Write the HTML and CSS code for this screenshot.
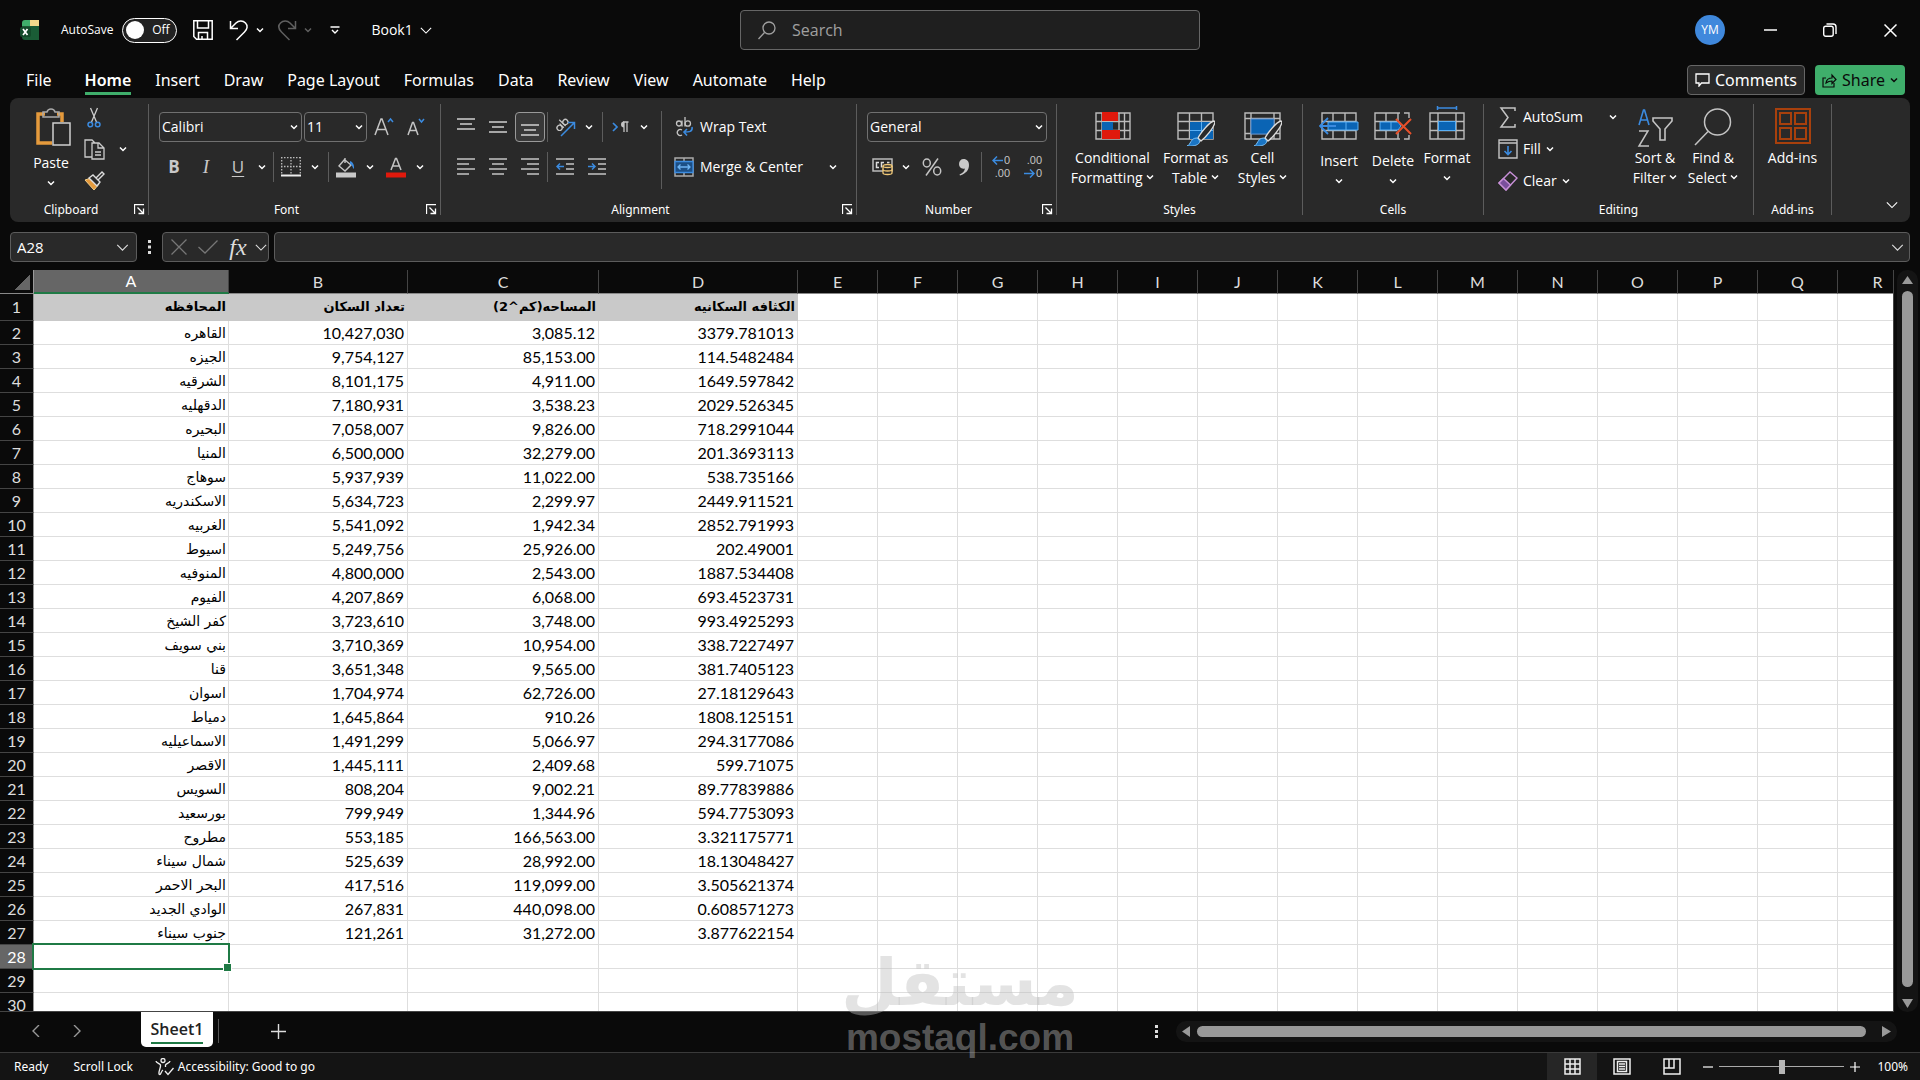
FILE: index.html
```html
<!DOCTYPE html>
<html lang="en">
<head>
<meta charset="utf-8">
<title>Book1 - Excel</title>
<link rel="stylesheet" href="styles.css">
</head>
<body>
<svg class="defs" aria-hidden="true">
  <symbol id="chev" viewBox="0 0 8 8"><path d="M1 2.5 4 5.5 7 2.5" fill="none" stroke="currentColor" stroke-width="1.5"/></symbol>
  <symbol id="chev-lg" viewBox="0 0 14 8"><path d="M1 1 7 7 13 1" fill="none" stroke="currentColor" stroke-width="1.3"/></symbol>
  <symbol id="launch" viewBox="0 0 11 11"><path d="M.5 10V.5H10M3.500 3.500 9.500 9.500M9.500 4.500V9.500H4.500" fill="none" stroke="currentColor" stroke-width="1.3"/></symbol>
</svg>
<div class="app">
  <header class="titlebar">
    <div class="title-left">
      <svg class="logo" width="20" height="20" viewBox="0 0 20 20"><path d="M2 3a3 3 0 0 1 3-3h5v7H2z" fill="#3fae6b"/><path d="M10 0h9v7h-9z" fill="#f3d98b"/><path d="M2 6h17v14H5a3 3 0 0 1-3-3z" fill="#1a5c36"/><rect y="7" width="11" height="10" rx="2" fill="#134a2a"/><path d="M3 9l4.500 6M7.500 9 3 15" stroke="#fff" stroke-width="1.7"/></svg>
      <label class="autosave">AutoSave <span class="toggle"><input type="checkbox"><i></i><b>Off</b></span></label>
      <button class="qa qa-save" aria-label="Save"><svg width="20" height="20" viewBox="0 0 20 20" fill="none" stroke="currentColor" stroke-width="1.500"><path d="M.8.800h18.400v18.400H3.500L.8 16.500zM4.500 1v7h11V1M5.500 19v-6.500h9V19M9 19v-3"/></svg></button>
      <button class="qa" aria-label="Undo"><svg width="20" height="21" viewBox="0 0 20 21" fill="none" stroke="currentColor" stroke-width="1.500"><path d="M1.500 1v7.500H9M1.500 8.500 7 3c3-3 7-2.500 9.500 0s2 6-1 9l-8 8"/></svg></button>
      <button class="qc" aria-label="Undo list"><svg width="8" height="8"><use href="#chev"/></svg></button>
      <button class="qa dim" aria-label="Redo"><svg width="20" height="21" viewBox="0 0 20 21" fill="none" stroke="currentColor" stroke-width="1.500"><path d="M18.500 1v7.500H11M18.500 8.500 13 3c-3-3-7-2.500-9.500 0s-2 6 1 9l8 8"/></svg></button>
      <button class="qc dim" aria-label="Redo list"><svg width="8" height="8"><use href="#chev"/></svg></button>
      <button class="qx" aria-label="Customize toolbar"><svg width="10" height="9" viewBox="0 0 10 9" fill="none" stroke="currentColor" stroke-width="1.400"><path d="M.5 1h9M2 4l3 3 3-3"/></svg></button>
      <button class="book">Book1 <svg width="12" height="7"><use href="#chev-lg"/></svg></button>
    </div>
    <label class="search"><svg width="18" height="19" viewBox="0 0 18 19" fill="none" stroke="currentColor" stroke-width="1.300"><circle cx="11" cy="7" r="6"/><path d="M6.500 11.500.5 18"/></svg><input type="text" placeholder="Search" aria-label="Search"></label>
    <div class="title-right">
      <button class="avatar">YM</button>
      <button class="win" aria-label="Minimize"><svg width="13" height="13" viewBox="0 0 13 13" stroke="#fff" stroke-width="1.500"><path d="M0 6h13"/></svg></button>
      <button class="win" aria-label="Restore"><svg width="14" height="14" viewBox="0 0 14 14" fill="none" stroke="#fff" stroke-width="1.400"><rect x=".7" y="3.300" width="9.500" height="10" rx="2"/><path d="M3.500 1h6.500a3 3 0 0 1 3 3v7"/></svg></button>
      <button class="win" aria-label="Close"><svg width="13" height="13" viewBox="0 0 13 13" stroke="#fff" stroke-width="1.500"><path d="M.5.500l12 12M12.500.500l-12 12"/></svg></button>
    </div>
  </header>

  <nav class="tabs">
    <button class="file">File</button><button class="on">Home</button><button>Insert</button><button>Draw</button><button>Page Layout</button><button>Formulas</button><button>Data</button><button>Review</button><button>View</button><button>Automate</button><button>Help</button>
    <button class="comments"><svg width="15" height="14" viewBox="0 0 15 14" fill="none" stroke="currentColor" stroke-width="1.300"><path d="M1 1h13v9H6.500L4 13v-3H1z"/></svg>Comments</button>
    <button class="share"><svg width="15" height="15" viewBox="0 0 15 15" fill="none" stroke="currentColor" stroke-width="1.200"><path d="M4 5H1v9h11v-4M4 10c.5-3.500 2.500-5 6-5V2l4 4.500-4 4V8C7.500 8 6 8.500 4 10z"/></svg>Share<svg width="8" height="8"><use href="#chev"/></svg></button>
  </nav>

  <section class="ribbon">
    <div class="group g-clip">
      <div class="body top3">
        <button class="big paste"><svg width="39" height="40" viewBox="-3 0 39 40" fill="none"><path d="M10 6H3v29h14M22 6h5v8" stroke="#e59a3c" stroke-width="3.500"/><path d="M8 4h4c1-4 7-4 8 0h4v5H8z" stroke="#aaa" stroke-width="1.500"/><rect x="18" y="15" width="17" height="22" fill="#292929" stroke="#d0d0d0" stroke-width="1.500"/></svg><span>Paste</span><svg width="8" height="8"><use href="#chev"/></svg></button>
        <div class="clips">
          <button aria-label="Cut"><svg width="14" height="21" viewBox="0 0 14 21" fill="none"><path d="M3.500 1 9.500 15M10.500 1 4.500 15" stroke="#ccc" stroke-width="1.300"/><circle cx="3.300" cy="17.500" r="2.300" stroke="#3b8be0" stroke-width="1.500"/><circle cx="10.700" cy="17.500" r="2.300" stroke="#3b8be0" stroke-width="1.500"/></svg></button>
          <button class="r2" aria-label="Copy"><svg width="21" height="21" viewBox="0 0 21 21" fill="none" stroke="#ccc" stroke-width="1.300"><path d="M8 18H1V1h7l3 3M8 4h7l5 5v11H8zM14 4v5h6M11 13h6M11 16h6"/></svg></button>
          <button class="r2" aria-label="Copy options"><svg width="8" height="8"><use href="#chev"/></svg></button>
          <button class="r3" aria-label="Format Painter"><svg width="21" height="20" viewBox="0 0 21 20" fill="none"><path d="M1 9l6-2 8 6-5 6z" fill="#e59a3c" stroke="#f3cf8b"/><path d="M5 7l4-3 7 7-3 4zM12 7l6-6 2 2-6 6" stroke="#ddd" stroke-width="1.400" fill="#292929"/></svg></button>
        </div>
      </div>
      <div class="cap"><span>Clipboard</span><button aria-label="Clipboard settings"><svg width="11" height="11"><use href="#launch"/></svg></button></div>
    </div><i class="div"></i>

    <div class="group g-font">
      <div class="body rows">
        <div class="row">
          <span class="combo c-font"><select aria-label="Font"><option>Calibri</option></select><svg width="8" height="8"><use href="#chev"/></svg></span>
          <span class="combo c-size"><select aria-label="Font size"><option>11</option></select><svg width="8" height="8"><use href="#chev"/></svg></span>
          <button class="ib" aria-label="Increase font size"><svg width="20" height="20" viewBox="0 0 20 20" fill="none"><path d="M1 18 7 2h1l6 16M3.300 12.500h8.400" stroke="#c4c4c4" stroke-width="1.500"/><path d="M14 5l2.500-3L19 5" stroke="#3b8be0" stroke-width="1.500"/></svg></button>
          <button class="ib" aria-label="Decrease font size"><svg width="20" height="20" viewBox="0 0 20 20" fill="none"><path d="M2 18 6.500 5.500h1L12 18M4 13.500h6" stroke="#c4c4c4" stroke-width="1.500"/><path d="M13 2l2.500 3L18 2" stroke="#3b8be0" stroke-width="1.500"/></svg></button>
        </div>
        <div class="row">
          <button class="ib fmt b">B</button><button class="ib fmt i">I</button><button class="ib fmt u">U</button><button class="cb" aria-label="Underline styles"><svg width="8" height="8"><use href="#chev"/></svg></button><i class="sep"></i>
          <button class="ib" aria-label="Borders"><svg width="20" height="20" viewBox="0 0 20 20" fill="none" stroke="#bbb"><path d="M.7 0v18M10 0v18M19.300 0v18M0 .700h20M0 9.500h20" stroke-dasharray="1.500 1.500" stroke-width="1.300"/><path d="M0 18.500h20" stroke="#eee" stroke-width="2"/></svg></button><button class="cb" aria-label="Border styles"><svg width="8" height="8"><use href="#chev"/></svg></button><i class="sep wide"></i>
          <button class="ib" aria-label="Fill color"><svg width="20" height="21" viewBox="0 0 20 21" fill="none"><path d="M9 1v5M9 2 3 9l6 5 6-6-6-5" stroke="#c4c4c4" stroke-width="1.400"/><path d="M14 4c3 1 4.500 4 4 8-1.500-1-1.500-4-4-5z" fill="#3b8be0"/><path d="M0 15.500h20v5H0z" fill="#c8c8c8"/></svg></button><button class="cb" aria-label="Fill colors"><svg width="8" height="8"><use href="#chev"/></svg></button>
          <button class="ib" aria-label="Font color"><svg width="20" height="21" viewBox="0 0 20 21" fill="none"><path d="M5 13 9.500 1.500h1L15 13M6.500 9h7" stroke="#c4c4c4" stroke-width="1.500"/><path d="M0 15.500h20v5H0z" fill="#e0190c"/></svg></button><button class="cb" aria-label="Font colors"><svg width="8" height="8"><use href="#chev"/></svg></button>
        </div>
      </div>
      <div class="cap"><span>Font</span><button aria-label="Font settings"><svg width="11" height="11"><use href="#launch"/></svg></button></div>
    </div><i class="div"></i>

    <div class="group g-align">
      <div class="body split">
        <div class="rows">
          <div class="row">
            <button class="ib" aria-label="Top align"><svg width="18" height="20" viewBox="0 0 18 20" stroke="#d0d0d0" stroke-width="1.500"><path d="M0 2h18M3 7h12M0 12h18"/></svg></button><button class="ib" aria-label="Middle align"><svg width="18" height="20" viewBox="0 0 18 20" stroke="#d0d0d0" stroke-width="1.500"><path d="M0 5h18M3 10h12M0 15h18"/></svg></button><button class="ib pressed" aria-label="Bottom align"><svg width="18" height="20" viewBox="0 0 18 20" stroke="#d0d0d0" stroke-width="1.500"><path d="M0 8h18M3 13h12M0 18h18"/></svg></button><i class="sep"></i>
            <button class="ib" aria-label="Orientation"><svg width="22" height="22" viewBox="0 0 22 22" fill="none"><g transform="rotate(-45 7 9)" stroke="#c4c4c4" stroke-width="1.300"><circle cx="4" cy="10" r="2.600"/><path d="M7 7v6M9.500 4v9"/><circle cx="12.200" cy="10" r="2.600"/></g><path d="M7 20 20 7M14 6.500h6.500V13" stroke="#3b8be0" stroke-width="1.500"/></svg></button><button class="cb" aria-label="Orientation options"><svg width="8" height="8"><use href="#chev"/></svg></button><i class="sep wide"></i>
            <button class="ib" aria-label="Text direction"><svg width="17" height="14" viewBox="0 0 17 14" fill="none"><path d="M1 3l4 4-4 4" stroke="#3b8be0" stroke-width="1.700"/><path d="M12 12V2M15 12V2M16.500 2H11" stroke="#c4c4c4" stroke-width="1.300"/><path d="M12 1.500a3 3 0 0 0 0 6z" fill="#c4c4c4"/></svg></button><button class="cb" aria-label="Text direction options"><svg width="8" height="8"><use href="#chev"/></svg></button>
          </div>
          <div class="row">
            <button class="ib" aria-label="Align left"><svg width="18" height="20" viewBox="0 0 18 20" stroke="#c4c4c4" stroke-width="1.500"><path d="M0 2h18M0 7h12M0 12h18M0 17h12"/></svg></button><button class="ib" aria-label="Center"><svg width="18" height="20" viewBox="0 0 18 20" stroke="#c4c4c4" stroke-width="1.500"><path d="M0 2h18M3 7h12M0 12h18M3 17h12"/></svg></button><button class="ib" aria-label="Align right"><svg width="18" height="20" viewBox="0 0 18 20" stroke="#c4c4c4" stroke-width="1.500"><path d="M0 2h18M6 7h12M0 12h18M6 17h12"/></svg></button><i class="sep"></i>
            <button class="ib" aria-label="Decrease indent"><svg width="18" height="20" viewBox="0 0 18 20" fill="none" stroke="#c4c4c4" stroke-width="1.500"><path d="M0 2h18M10 7h8M10 12h8M0 17h18"/><path d="M8 9.500H1M4 6.500l-3 3 3 3" stroke="#3b8be0"/></svg></button><button class="ib" aria-label="Increase indent"><svg width="18" height="20" viewBox="0 0 18 20" fill="none" stroke="#c4c4c4" stroke-width="1.500"><path d="M0 2h18M10 7h8M10 12h8M0 17h18"/><path d="M0 9.500h7M4 6.500l3 3-3 3" stroke="#3b8be0"/></svg></button>
          </div>
        </div>
        <i class="tall"></i>
        <div class="rows">
          <button class="wide-btn"><svg width="20" height="20" viewBox="0 0 20 20" fill="none" stroke="#c4c4c4" stroke-width="1.300"><circle cx="5" cy="6.500" r="2.500"/><path d="M8 3.500V9.500M11 0v9.500"/><circle cx="13.800" cy="6.500" r="2.700"/><path d="M8 13a3 3 0 1 0 0 5"/><path d="M18 10c1 5-3 5-8 5M13 12l-3 3 3 3.500" stroke="#3b8be0" stroke-width="1.600"/></svg>Wrap Text</button>
          <div class="row"><button class="wide-btn merge"><svg width="20" height="20" viewBox="0 0 20 20" fill="none"><path d="M1 1h18v18H1zM10 1v3M10 16v3" stroke="#aaa" stroke-width="1.500"/><path d="M1 4.500h18v11H1z" fill="#1c4f86" stroke="#3b8be0" stroke-width="1.300"/><path d="M4 10h12M6.500 7.500 4 10l2.500 2.500M13.500 7.500 16 10l-2.500 2.500" stroke="#6db3f2" stroke-width="1.300"/></svg>Merge &amp; Center</button><button class="cb" aria-label="Merge options"><svg width="8" height="8"><use href="#chev"/></svg></button></div>
        </div>
      </div>
      <div class="cap"><span>Alignment</span><button aria-label="Alignment settings"><svg width="11" height="11"><use href="#launch"/></svg></button></div>
    </div><i class="div"></i>

    <div class="group g-num">
      <div class="body rows">
        <span class="combo c-num"><select aria-label="Number format"><option>General</option></select><svg width="8" height="8"><use href="#chev"/></svg></span>
        <div class="row">
          <button class="ib" aria-label="Accounting format"><svg width="21" height="18" viewBox="0 0 21 18" fill="none"><path d="M1 1h19v12H1z" stroke="#bbb" stroke-width="1.500"/><path d="M7 4.500H4.500v5H7M12 4.500H9.500v5M15 4.500h2.500" stroke="#ddd" stroke-width="1.500"/><path d="M11 8c0-2 9-2 9 0v7c0 2-9 2-9 0z" fill="#292929" stroke="#f0c878" stroke-width="1.300"/><path d="M11 8c0 2 9 2 9 0M11 11.500c0 2 9 2 9 0" stroke="#f0c878" stroke-width="1.300"/></svg></button><button class="cb" aria-label="Accounting options"><svg width="8" height="8"><use href="#chev"/></svg></button>
          <button class="ib pct" aria-label="Percent style"><svg width="20" height="20" viewBox="0 0 20 20" fill="none" stroke="#c4c4c4" stroke-width="1.500"><ellipse cx="4.800" cy="6" rx="3.500" ry="4"/><ellipse cx="15.200" cy="14" rx="3.500" ry="4"/><path d="M16 1.500 4 18.500"/></svg></button><button class="ib" aria-label="Comma style"><svg width="12" height="18" viewBox="0 0 12 18" fill="#c8c8c8"><path d="M5.500 1C9 1 11 3.500 11 7c0 5-3 8.500-9 10.500l-.5-1C5 15 6.500 13 7 10.500 3 11.500 1 9 1 6c0-3 2-5 4.500-5z"/></svg></button><i class="sep"></i>
          <button class="ib dec" aria-label="Increase decimal"><svg width="11" height="9" viewBox="0 0 11 9" fill="none" stroke="#3b8be0" stroke-width="1.500"><path d="M11 4.500H1M5 .500l-4 4 4 4"/></svg><span>0</span><span>.00</span></button><button class="ib dec" aria-label="Decrease decimal"><span>.00</span><svg width="11" height="9" viewBox="0 0 11 9" fill="none" stroke="#3b8be0" stroke-width="1.500"><path d="M0 4.500h10M6 .500l4 4-4 4"/></svg><span>0</span></button>
        </div>
      </div>
      <div class="cap"><span>Number</span><button aria-label="Number settings"><svg width="11" height="11"><use href="#launch"/></svg></button></div>
    </div><i class="div"></i>

    <div class="group g-styles">
      <div class="body bigs">
        <button class="big two w88"><svg width="36" height="34" viewBox="0 0 36 34" fill="none"><path d="M1 1h34v26H1zM1 9.500h34M1 18.500h34M7 1v26M24 1v26M29.500 1v26" stroke="#bbb" stroke-width="1.400"/><path d="M7 0h16v9H7zM7 18h18v9H7z" fill="#e0190c"/><path d="M7 10h11v8H7z" fill="#0a64b4"/></svg><span>Conditional<br>Formatting <svg width="8" height="8"><use href="#chev"/></svg></span></button>
        <button class="big two w70"><svg width="38" height="34" viewBox="0 0 38 34" fill="none"><path d="M1 1h35v26H1zM1 9.500h35M1 18.500h35M12.500 1v26M24.500 1v26" stroke="#bbb" stroke-width="1.400"/><path d="M13 10h23v17H13z" fill="#0a64b4"/><path d="M24.500 10v17M13 18.500h23" stroke="#5ab0f5"/><path d="M37 9c-5 1-14 13-16 17l3 3c4-3 13-13 14-19z" fill="#292929" stroke="#ddd" stroke-width="1.400"/><path d="M10 34c4-1 3-8 10-8 6 4 1 9-10 8z" fill="#1a75c4" stroke="#7cc0f5"/></svg><span>Format as<br>Table <svg width="8" height="8"><use href="#chev"/></svg></span></button>
        <button class="big two w56"><svg width="38" height="34" viewBox="0 0 38 34" fill="none"><path d="M1 1h35v26H1zM1 6.500h35M1 21.500h35M7 1v26M30 1v26" stroke="#bbb" stroke-width="1.400"/><path d="M7 7h23v15H7z" fill="#0a64b4" stroke="#5a8fd0"/><path d="M37 9c-5 1-14 13-16 17l3 3c4-3 13-13 14-19z" fill="#292929" stroke="#ddd" stroke-width="1.400"/><path d="M10 34c4-1 3-8 10-8 6 4 1 9-10 8z" fill="#1a75c4" stroke="#7cc0f5"/></svg><span>Cell<br>Styles <svg width="8" height="8"><use href="#chev"/></svg></span></button>
      </div>
      <div class="cap"><span>Styles</span></div>
    </div><i class="div"></i>

    <div class="group g-cells">
      <div class="body bigs">
        <button class="big one"><svg width="40" height="28" viewBox="0 0 40 28" fill="none"><path d="M3 1h34v26H3zM14 1v26M26 1v26M3 9.500h34M3 18.500h34" stroke="#bbb" stroke-width="1.400"/><path d="M9 10h30v8H9z" fill="#0a64b4" stroke="#5ab0f5"/><path d="M27 10v8" stroke="#5ab0f5"/><path d="M17 14H2M9 6l-8 8 8 8" stroke="#3b8be0" stroke-width="1.800"/></svg><span>Insert</span><svg width="8" height="8"><use href="#chev"/></svg></button>
        <button class="big one"><svg width="38" height="28" viewBox="0 0 38 28" fill="none"><path d="M26 1H1v26h25M30 1h5v5M30 27h5v-4M12 1v26M24 1v8M24 20v7M1 9.500h22M1 18.500h22" stroke="#bbb" stroke-width="1.400"/><path d="M6 10h18l3 4-3 4H6z" fill="#0a64b4" stroke="#5ab0f5"/><path d="M17 10v8" stroke="#5ab0f5"/><path d="M22 7l15 15M37 7 22 22" stroke="#e8502a" stroke-width="2"/></svg><span>Delete</span><svg width="8" height="8"><use href="#chev"/></svg></button>
        <button class="big one fmtbig"><svg width="36" height="34" viewBox="0 0 36 34" fill="none"><path d="M1 7h34v26H1zM9 7v26M27 7v26M1 15.500h34M1 24.500h34" stroke="#bbb" stroke-width="1.400"/><path d="M9.500 15.500h17v9h-17z" fill="#0a64b4" stroke="#5ab0f5"/><path d="M8 2h20M8.500 0v4M27.500 0v4" stroke="#3b8be0" stroke-width="1.500"/></svg><span>Format</span><svg width="8" height="8"><use href="#chev"/></svg></button>
      </div>
      <div class="cap"><span>Cells</span></div>
    </div><i class="div"></i>

    <div class="group g-edit">
      <div class="body split">
        <div class="list">
          <div class="row"><button class="li"><svg width="20" height="21" viewBox="0 0 20 21" fill="none" stroke="#c4c4c4" stroke-width="1.500"><path d="M17 4V1H3l7 9.500L3 20h14v-3"/></svg>AutoSum</button><button class="cb" aria-label="AutoSum options"><svg width="8" height="8"><use href="#chev"/></svg></button></div>
          <button class="li"><svg width="20" height="20" viewBox="0 0 20 20" fill="none" stroke="#c4c4c4" stroke-width="1.400"><path d="M1 1h18v18H1zM1 4h18"/><path d="M10 7v8M6.500 12l3.500 3.500 3.500-3.500" stroke="#3b8be0" stroke-width="1.600"/></svg>Fill <svg width="8" height="8"><use href="#chev"/></svg></button>
          <button class="li"><svg width="20" height="20" viewBox="0 0 20 20" fill="none" stroke="#c890d8" stroke-width="1.400"><path d="M1 12 12 1l7 6L8 19z"/><path d="M1 12l4.500-4.500 7 6.500L8 19z" fill="#7a4f9c"/></svg>Clear <svg width="8" height="8"><use href="#chev"/></svg></button>
        </div>
        <div class="bigs">
          <button class="big two w56 top1"><svg width="36" height="40" viewBox="0 0 36 40" fill="none"><path d="M2 17 6.500 2h1L12 17M3.500 12h7" stroke="#3b8be0" stroke-width="1.600"/><path d="M2 23h9L2 38h10" stroke="#c4c4c4" stroke-width="1.500"/><path d="M16 10h19v3l-7 8v11h-5V21l-7-8z" stroke="#c4c4c4" stroke-width="1.600"/></svg><span>Sort &amp;<br>Filter <svg width="8" height="8"><use href="#chev"/></svg></span></button>
          <button class="big two w60 top1"><svg width="38" height="40" viewBox="0 0 38 40" fill="none" stroke="#c4c4c4" stroke-width="1.500"><circle cx="23.500" cy="14" r="13"/><path d="M14 23.500 1 37"/></svg><span>Find &amp;<br>Select <svg width="8" height="8"><use href="#chev"/></svg></span></button>
        </div>
      </div>
      <div class="cap"><span>Editing</span></div>
    </div><i class="div"></i>

    <div class="group g-add">
      <div class="body bigs">
        <button class="big two w70 top1"><svg width="36" height="40" viewBox="0 0 36 40" fill="none" stroke="#a8400c" stroke-width="2"><path d="M1 1h34v34H1z"/><path d="M5 5h11v11H5zM20 5h11v11H20zM5 20h11v11H5zM20 20h11v11H20z"/></svg><span>Add-ins</span></button>
      </div>
      <div class="cap"><span>Add-ins</span></div>
    </div><i class="div"></i>
    <button class="collapse" aria-label="Collapse ribbon"><svg width="12" height="8"><use href="#chev-lg"/></svg></button>
  </section>

  <section class="formula">
    <div class="box name"><input type="text" value="A28" aria-label="Name box"><button aria-label="Names"><svg width="13" height="7"><use href="#chev-lg"/></svg></button></div>
    <svg class="dots" width="3" height="14" viewBox="0 0 3 14" fill="#ddd"><path d="M0 0h3v3H0zM0 5.500h3v3H0zM0 11h3v3H0z"/></svg>
    <div class="box fx">
      <button class="dim" aria-label="Cancel"><svg width="16" height="16" viewBox="0 0 16 16" stroke="currentColor" stroke-width="1.300"><path d="M.5.500l15 15M15.500.500l-15 15"/></svg></button>
      <button class="dim" aria-label="Enter"><svg width="20" height="14" viewBox="0 0 20 14" fill="none" stroke="currentColor" stroke-width="1.300"><path d="M.5 7 7 13 19.500.500"/></svg></button>
      <button class="fn">fx</button>
      <button class="mini" aria-label="Functions"><svg width="12" height="7"><use href="#chev-lg"/></svg></button>
    </div>
    <div class="box bar"><input type="text" aria-label="Formula"><button aria-label="Expand"><svg width="13" height="7"><use href="#chev-lg"/></svg></button></div>
  </section>

  <main class="work">
    <div class="sheet"><table id="grid"></table></div>
    <div class="vscroll"><svg width="11" height="9" viewBox="0 0 11 9" fill="#999"><path d="M5.500 0 11 8H0z"/></svg><i></i><svg width="11" height="9" viewBox="0 0 11 9" fill="#999"><path d="M5.500 9 11 0H0z"/></svg></div>
  </main>

  <section class="strip">
    <button class="nav" aria-label="Previous sheet"><svg width="8" height="12" viewBox="0 0 8 12" fill="none" stroke="currentColor" stroke-width="1.400"><path d="M7 0 1 6l6 6"/></svg></button>
    <button class="nav" aria-label="Next sheet"><svg width="8" height="12" viewBox="0 0 8 12" fill="none" stroke="currentColor" stroke-width="1.400"><path d="M1 0l6 6-6 6"/></svg></button>
    <button class="sheet-tab"><span>Sheet1</span></button><i class="tick"></i>
    <button class="plus" aria-label="New sheet"><svg width="15" height="15" viewBox="0 0 15 15" stroke="#ddd" stroke-width="1.400"><path d="M7.500 0v15M0 7.500h15"/></svg></button>
    <svg class="dots" width="3" height="13" viewBox="0 0 3 13" fill="#ddd"><path d="M0 0h3v3H0zM0 5h3v3H0zM0 10h3v3H0z"/></svg>
    <div class="hscroll"><svg width="9" height="11" viewBox="0 0 9 11" fill="#999"><path d="M0 5.500 8 0v11z"/></svg><i></i><svg width="9" height="11" viewBox="0 0 9 11" fill="#999"><path d="M9 5.500 0 0v11z"/></svg></div>
  </section>

  <footer class="status">
    <span class="ready">Ready</span><span class="lock">Scroll Lock</span>
    <button class="acc"><svg width="19" height="18" viewBox="0 0 19 18" fill="none" stroke="#eee" stroke-width="1.300"><circle cx="8" cy="2.500" r="2"/><path d="M1 3c0 2 4 2.500 4.500 4 .5 3-2 5-1.500 9 2 2 2-3 4-4M15 3c0 2-4 2.500-4.500 4v2M10 13l3 3.500L18.500 10"/></svg>Accessibility: Good to go</button>
    <div class="views">
      <button class="cur" aria-label="Normal"><svg width="17" height="17" viewBox="0 0 17 17" fill="none" stroke="#eee" stroke-width="1.500"><path d="M1 1h15v15H1zM6 1v15M11 1v15M1 6h15M1 11h15"/></svg></button>
      <button aria-label="Page Layout view"><svg width="18" height="17" viewBox="0 0 18 17" fill="none" stroke="#eee" stroke-width="1.500"><path d="M1 1h16v15H1zM4.500 3.500h9v10h-9zM6 6h6M6 8.500h6M6 11h6"/></svg></button>
      <button aria-label="Page Break view"><svg width="18" height="17" viewBox="0 0 18 17" fill="none" stroke="#eee" stroke-width="1.500"><path d="M1 1h16v15H1zM1 10h10V1M6 1v9"/></svg></button>
    </div>
    <button class="zb" aria-label="Zoom out"><svg width="10" height="10" viewBox="0 0 10 10" stroke="#fff" stroke-width="1.200"><path d="M0 5h10"/></svg></button>
    <input class="zoom" type="range" min="0" max="100" value="50" aria-label="Zoom">
    <button class="zb" aria-label="Zoom in"><svg width="10" height="10" viewBox="0 0 10 10" stroke="#fff" stroke-width="1.200"><path d="M0 5h10M5 0v10"/></svg></button>
    <span class="pctv">100%</span>
  </footer>
  <div class="mark"><span class="mark-ar" lang="ar">مستقل</span><span class="mark-en">mostaql.com</span></div>
</div>
<script src="script.js"></script>
</body>
</html>
```
FILE: styles.css
```css
* { box-sizing: border-box; }
body { margin: 0; background: #0a0a0a; color: #fff; font: 14px/20px "Open Sans", "Noto Sans", sans-serif; }
button, input, select { font: inherit; color: inherit; background: none; border: 0; padding: 0; margin: 0; outline: 0; }
button { display: flex; align-items: center; justify-content: center; white-space: nowrap; }
svg { display: block; flex: none; }
.defs { display: none; }
.app { position: relative; display: flex; flex-direction: column; height: 100vh; overflow: hidden; }
.dim { color: #606060; }

.titlebar { display: grid; grid-template-columns: 1fr 460px 1fr; align-items: center; height: 60px; padding-left: 20px; flex: none; }
.title-left, .title-right { display: flex; align-items: center; }
.title-left { font-size: 12px; }
.autosave { display: flex; align-items: center; gap: 9px; margin-left: 21px; }
.toggle { display: grid; grid-template-columns: 22px 1fr; align-items: center; width: 55px; height: 25px; padding: 0 3px; border: 1px solid #fff; border-radius: 13px; background: #222; }
.toggle input { display: none; }
.toggle i { width: 18px; height: 18px; border-radius: 50%; background: #fff; }
.toggle b { font-weight: 400; text-align: center; }
.qa { width: 24px; height: 30px; margin-left: 6px; }
.qa-save { margin: 0 6px 0 14px; }
.qc { width: 18px; height: 30px; }
.qx { width: 20px; height: 30px; margin-left: 8px; }
.book { gap: 7px; margin-left: 26px; font-size: 14px; }
.search { display: flex; align-items: center; gap: 16px; height: 40px; padding-left: 17px; border: 1px solid #666; border-radius: 4px; background: #1f1f1f; color: #a0a0a0; }
.search input { flex: 1; font-size: 16px; }
.search input::placeholder { color: #a0a0a0; }
.title-right { justify-content: flex-end; }
.avatar { width: 30px; height: 30px; margin-right: 15px; border-radius: 50%; background: #3f88dc; font-size: 12px; }
.win { width: 60px; height: 40px; }

.tabs { display: flex; align-items: center; height: 38px; padding: 2px 15px 0 14px; flex: none; font: 16px/20px "Noto Sans", sans-serif; }
.tabs button { height: 30px; padding: 0 12px; }
.tabs .file { margin-right: 9px; }
.tabs .on { font-weight: 600; background: linear-gradient(#3fae6b, #3fae6b) 12px 100% / calc(100% - 24px) 3px no-repeat; }
.tabs .comments { gap: 5px; width: 118px; margin-left: auto; padding: 0; border: 1px solid #666; border-radius: 4px; background: #292929; }
.tabs .share { gap: 5px; width: 90px; margin-left: 10px; padding: 0; border-radius: 4px; background: #3fae6b; color: #0a0a0a; }

.ribbon { display: flex; height: 124px; margin: 0 10px; border-radius: 8px; background: #292929; flex: none; }
.div { width: 1px; margin: 6px 0 7px; background: #5c5c5c; flex: none; }
.group { display: flex; flex-direction: column; flex: none; }
.g-clip { width: 138px; }
.g-font { width: 291px; }
.g-align { width: 415px; }
.g-num { width: 199px; }
.g-styles { width: 245px; }
.g-cells { width: 180px; }
.g-edit { width: 269px; }
.g-add { width: 77px; }
.body { display: flex; height: 99px; }
.cap { display: flex; align-items: center; height: 25px; font: 12px/20px "Noto Sans", sans-serif; }
.cap span { flex: 1; text-align: center; }
.cap button { width: 15px; height: 15px; margin-right: 1px; }

.rows { display: flex; flex-direction: column; gap: 10px; padding: 14px 0 0 10px; }
.row { display: flex; align-items: center; gap: 2px; height: 30px; }
.ib { width: 30px; height: 30px; flex: none; }
.cb { width: 18px; height: 30px; margin-left: -2px; flex: none; }
.sep { width: 1px; height: 30px; background: #5c5c5c; flex: none; }
.sep.wide { margin-left: 2px; }
.pressed { border: 1px solid #999; border-radius: 4px; background: #383838; }
.fmt { color: #c8c8c8; font-size: 17px; }
.fmt.b { font-weight: 700; }
.fmt.i { font-family: "Liberation Serif", serif; font-style: italic; font-size: 19px; }
.fmt.u { text-decoration: underline; text-underline-offset: 3px; }
.combo { display: grid; align-items: center; height: 30px; border: 1px solid #707070; border-radius: 4px; flex: none; }
.combo select { grid-area: 1 / 1; height: 28px; padding-left: 2px; appearance: none; }
.combo svg { grid-area: 1 / 1; justify-self: end; margin-right: 3px; pointer-events: none; }
.c-font { width: 143px; }
.c-size { width: 63px; }
.c-num { width: 180px; }

.big { flex-direction: column; justify-content: flex-start; flex: none; }
.big span { display: block; text-align: center; line-height: 20px; }
.big span svg { display: inline-block; vertical-align: 2px; }
.bigs { display: flex; }
.body.bigs { justify-content: center; gap: 4px; }
.big.two { padding-top: 14px; }
.big.two > svg { margin-bottom: 2px; }
.big.top1 { padding-top: 10px; }
.big.top1 > svg { margin-bottom: 0; }
.big.one { width: 54px; padding-top: 14px; }
.big.one > svg:first-child { margin-bottom: 11px; }
.big.fmtbig { padding-top: 8px; }
.big.fmtbig > svg:first-child { margin-bottom: 8px; }
.big.one > svg:last-child { margin-top: 6px; }
.g-cells .body { gap: 0; }
.w88 { width: 88px; }
.w70 { width: 70px; }
.w60 { width: 60px; }
.w56 { width: 56px; }
.top3 { padding-top: 3px; }
.paste { width: 54px; margin-left: 14px; padding-top: 7px; }
.paste > svg:first-child { margin-bottom: 5px; }
.paste > svg:last-child { margin-top: 6px; }
.clips { display: grid; grid-template: repeat(3, 32px) / 20px 38px; margin-left: 6px; }
.clips .r2 { grid-row: 2; }
.clips .r3 { grid-row: 3; }
.split > .tall { width: 1px; margin: 13px 0 8px 8px; background: #5c5c5c; }
.split > .tall + .rows { padding-left: 12px; }
.wide-btn { justify-content: flex-start; gap: 6px; height: 30px; }
.merge { width: 150px; }
.list { padding: 3px 0 0 14px; width: 138px; margin-right: 5px; }
.list .row, .list .li { height: 32px; }
.li { gap: 5px; justify-content: flex-start; }
.list .row { justify-content: space-between; }
.dec { flex-wrap: wrap; align-content: center; justify-content: flex-end; padding-right: 4px; font: 11px/13px "Liberation Sans", Arial, sans-serif; color: #c4c4c4; column-gap: 1px; }
.collapse { width: 30px; height: 30px; margin: 92px 3px 0 auto; }

.formula { display: flex; align-items: center; gap: 5px; height: 30px; margin: 10px 10px 8px; flex: none; }
.box { display: flex; align-items: center; height: 30px; border: 1px solid #5c5c5c; border-radius: 4px; background: #292929; color: #ddd; }
.box button { width: 28px; height: 28px; }
.box input { flex: 1; min-width: 0; padding-left: 6px; }
.name { width: 127px; }
.name input { font-size: 15px; color: #fff; }
.formula .dots { margin: 0 6px; }
.box.fx { width: 107px; padding-left: 1px; }
.fx button.dim { width: 29px; color: #777; }
.fx .fn { width: 32px; font: italic 24px/24px "Liberation Serif", serif; }
.fx .mini { width: 14px; }
.bar { flex: 1; }
.bar button { width: 24px; }

.work { display: flex; flex: 1; min-height: 0; gap: 3px; padding-right: 2px; }
.sheet { flex: 1; min-width: 0; overflow: hidden; border-right: 1px solid #444; border-bottom: 1px solid #444; }
table { table-layout: fixed; width: 1918px; border-collapse: separate; border-spacing: 0; font: 16px/20px Lato, "DejaVu Sans", sans-serif; color: #000; background: #fff; }
.c-head { width: 34px; }
.c-a { width: 195px; }
.c-b { width: 179px; }
.c-c { width: 191px; }
.c-d { width: 199px; }
th { padding: 0; background: #0a0a0a; color: #ddd; font-weight: 400; }
thead th { height: 24px; border-right: 1px solid #444; border-bottom: 1px solid #888; }
thead th.hot { background: #666; color: #fff; border-bottom: 2px solid #1f7a45; }
thead th:first-child { background: linear-gradient(135deg, transparent 50%, #666 50%) 15px 4px / 15px 16px no-repeat #0a0a0a; border-right-color: #999; }
tbody th { height: 24px; border-right: 1px solid #999; border-bottom: 1px solid #444; }
tbody th.hot { background: #666; color: #fff; }
td { height: 24px; padding: 0 3px 0 0; border-right: 1px solid #dedede; border-bottom: 1px solid #dedede; text-align: right; white-space: nowrap; }
td[lang="ar"] { font: 14px/20px "DejaVu Sans", sans-serif; }
.lead th, .lead td { height: 27px; }
.lead td[lang="ar"] { background: #c9c9c9; border-color: #c9c9c9; font-size: 13px; font-weight: 700; }
td.cursor { position: relative; }
td.cursor::before { content: ""; position: absolute; inset: -2px; border: 2px solid #1f7a45; }
td.cursor::after { content: ""; position: absolute; right: -4px; bottom: -4px; width: 7px; height: 7px; border: 1px solid #fff; background: #1f7a45; }
.vscroll, .hscroll { display: flex; align-items: center; background: #141414; border-radius: 10px; }
.vscroll { flex-direction: column; width: 21px; padding: 6px 0 4px; gap: 6px; }
.vscroll i { flex: 1; width: 11px; margin-bottom: 6px; border-radius: 6px; background: #999; }

.strip { display: flex; align-items: center; height: 40px; flex: none; padding: 0 23px 2px 0; }
.nav { width: 41px; height: 30px; color: #999; }
.nav:first-child { margin-left: 15px; }
.sheet-tab { align-self: flex-start; width: 72px; height: 35px; margin-left: 44px; border-radius: 0 0 5px 5px; background: #fff; color: #222; font-size: 16px; font-weight: 600; }
.sheet-tab span { border-bottom: 2px solid #1f7a45; line-height: 26px; }
.tick { width: 1px; height: 24px; margin-left: 5px; background: #555; }
.plus { width: 30px; height: 30px; margin-left: 44px; }
.strip .dots { margin-left: auto; margin-right: 18px; }
.hscroll { flex: 0 1 721px; height: 21px; padding: 0 6px; gap: 6px; }
.hscroll i { flex: 1; height: 11px; margin-right: 10px; border-radius: 6px; background: #999; }

.status { display: flex; align-items: center; height: 28px; padding: 0 12px 0 14px; border-top: 1px solid #3a3a3a; background: #141414; font: 12px/20px "Noto Sans", sans-serif; flex: none; }
.lock { margin-left: 25px; }
.acc { gap: 4px; margin-left: 22px; }
.views { display: flex; margin-left: auto; height: 100%; }
.views button { width: 50px; }
.views .cur { background: #262626; }
.zb { width: 22px; height: 20px; }
.zoom { width: 125px; height: 20px; appearance: none; }
.zoom::-webkit-slider-runnable-track { height: 14px; background: linear-gradient(#aaa, #aaa) 0 50% / 100% 1px no-repeat; }
.zoom::-webkit-slider-thumb { appearance: none; width: 6px; height: 14px; background: #b5b5b5; }
.pctv { margin-left: 11px; }

.mark { position: absolute; left: 50%; bottom: 20px; width: 230px; margin-left: -115px; display: flex; flex-direction: column; align-items: center; color: rgba(190, 190, 190, .43); pointer-events: none; white-space: nowrap; font-weight: 700; }
.mark-ar { font: 700 65px/66px "DejaVu Sans", sans-serif; }
.mark-en { font: 700 37px/44px "Liberation Sans", Arial, sans-serif; }
```
FILE: script.js
```js
const head = ["المحافظه", "تعداد السكان", "المساحه(كم^2)", "الكثافه السكانيه"];
const data = [
  ["القاهره", "10,427,030", "3,085.12", "3379.781013"],
  ["الجيزه", "9,754,127", "85,153.00", "114.5482484"],
  ["الشرقيه", "8,101,175", "4,911.00", "1649.597842"],
  ["الدقهليه", "7,180,931", "3,538.23", "2029.526345"],
  ["البحيره", "7,058,007", "9,826.00", "718.2991044"],
  ["المنيا", "6,500,000", "32,279.00", "201.3693113"],
  ["سوهاج", "5,937,939", "11,022.00", "538.735166"],
  ["الاسكندريه", "5,634,723", "2,299.97", "2449.911521"],
  ["الغربيه", "5,541,092", "1,942.34", "2852.791993"],
  ["اسيوط", "5,249,756", "25,926.00", "202.49001"],
  ["المنوفيه", "4,800,000", "2,543.00", "1887.534408"],
  ["الفيوم", "4,207,869", "6,068.00", "693.4523731"],
  ["كفر الشيخ", "3,723,610", "3,748.00", "993.4925293"],
  ["بني سويف", "3,710,369", "10,954.00", "338.7227497"],
  ["قنا", "3,651,348", "9,565.00", "381.7405123"],
  ["اسوان", "1,704,974", "62,726.00", "27.18129643"],
  ["دمياط", "1,645,864", "910.26", "1808.125151"],
  ["الاسماعيليه", "1,491,299", "5,066.97", "294.3177086"],
  ["الاقصر", "1,445,111", "2,409.68", "599.71075"],
  ["السويس", "808,204", "9,002.21", "89.77839886"],
  ["بورسعيد", "799,949", "1,344.96", "594.7753093"],
  ["مطروح", "553,185", "166,563.00", "3.321175771"],
  ["شمال سيناء", "525,639", "28,992.00", "18.13048427"],
  ["البحر الاحمر", "417,516", "119,099.00", "3.505621374"],
  ["الوادي الجديد", "267,831", "440,098.00", "0.608571273"],
  ["جنوب سيناء", "121,261", "31,272.00", "3.877622154"]
];
const letters = "ABCDEFGHIJKLMNOPQR".split("");
const empty = n => "<td></td>".repeat(n);
const arabic = t => `<td lang="ar" dir="rtl">${t}</td>`;

let html = '<colgroup><col class="c-head"><col class="c-a"><col class="c-b"><col class="c-c"><col class="c-d">' + "<col>".repeat(14) + "</colgroup>";
html += "<thead><tr><th></th>" + letters.map(l => `<th scope="col"${l === "A" ? ' class="hot"' : ""}>${l}</th>`).join("") + "</tr></thead><tbody>";
html += '<tr class="lead"><th scope="row">1</th>' + head.map(arabic).join("") + empty(14) + "</tr>";
data.forEach((r, i) => {
  html += `<tr><th scope="row">${i + 2}</th>${arabic(r[0])}` + r.slice(1).map(v => `<td>${v}</td>`).join("") + empty(14) + "</tr>";
});
html += '<tr><th scope="row" class="hot">28</th><td class="cursor"></td>' + empty(17) + "</tr>";
for (let n = 29; n <= 30; n++) html += `<tr><th scope="row">${n}</th>${empty(18)}</tr>`;
document.getElementById("grid").innerHTML = html + "</tbody>";
```
